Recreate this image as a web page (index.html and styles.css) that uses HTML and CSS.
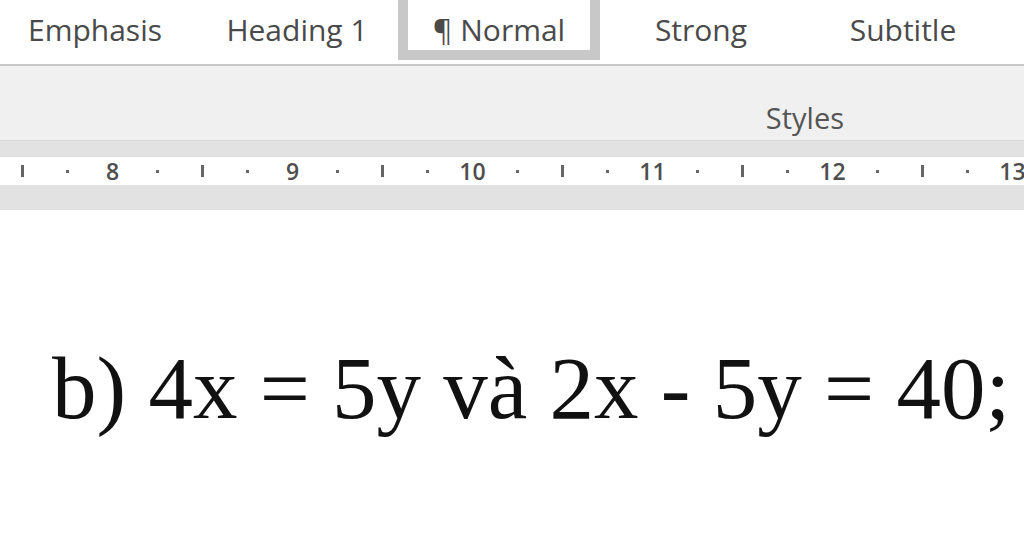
FILE: index.html
```html
<!DOCTYPE html>
<html lang="vi">
<head>
    <meta charset="UTF-8">
    <title>Styles</title>
    <link rel="stylesheet" href="styles.css">
</head>
<body>

<div class="gallery">
    <div class="style-item">Emphasis</div>
    <div class="style-item">Heading 1</div>
    <div class="style-item active">¶ Normal</div>
    <div class="style-item">Strong</div>
    <div class="style-item">Subtitle</div>
</div>

<div class="group-label">
    <span>Styles</span>
</div>

<div class="ruler-bar">
    <div class="ruler">
        <div class="cell"><span class="tick"></span></div>
        <div class="cell"><span class="dot"></span></div>
        <div class="cell num">8</div>
        <div class="cell"><span class="dot"></span></div>
        <div class="cell"><span class="tick"></span></div>
        <div class="cell"><span class="dot"></span></div>
        <div class="cell num">9</div>
        <div class="cell"><span class="dot"></span></div>
        <div class="cell"><span class="tick"></span></div>
        <div class="cell"><span class="dot"></span></div>
        <div class="cell num">10</div>
        <div class="cell"><span class="dot"></span></div>
        <div class="cell"><span class="tick"></span></div>
        <div class="cell"><span class="dot"></span></div>
        <div class="cell num">11</div>
        <div class="cell"><span class="dot"></span></div>
        <div class="cell"><span class="tick"></span></div>
        <div class="cell"><span class="dot"></span></div>
        <div class="cell num">12</div>
        <div class="cell"><span class="dot"></span></div>
        <div class="cell"><span class="tick"></span></div>
        <div class="cell"><span class="dot"></span></div>
        <div class="cell num">13</div>
    </div>
</div>

<div class="page">
    <p class="line">b) 4x = 5y và 2x - 5y = 40;</p>
</div>

</body>
</html>
```

FILE: styles.css
```css
body {
    margin: 0;
    padding: 0;
    background-color: white;
    overflow: hidden;
    font-family: "Open Sans", "Noto Sans", sans-serif;
}

/* style gallery */
.gallery {
    height: 64px;
    display: flex;
    align-items: flex-start;
    margin-left: -6px;
    border-bottom: 2px solid #c8c8c8;
    background-color: white;
}
.style-item {
    flex: 0 0 202px;
    box-sizing: border-box;
    height: 60px;
    padding-top: 10px;
    text-align: center;
    font-size: 30px;
    line-height: 40px;
    color: #4a4a4a;
}
.style-item.active {
    border: 10px solid #c8c8c8;
    border-top: none;
}

.group-label {
    height: 74px;
    box-sizing: border-box;
    padding: 32px 180px 0 0;
    background-color: #f0f0f0;
    display: flex;
    justify-content: flex-end;
}
.group-label span {
    font-size: 29px;
    line-height: 40px;
    color: #555;
}

/* ruler */
.ruler-bar {
    border-top: 1px solid #d6d6d6;
    background-color: #e2e2e2;
    padding: 16px 0 25px 0;
}
.ruler {
    height: 28px;
    background-color: white;
    display: flex;
    white-space: nowrap;
}
.cell {
    flex: 0 0 45px;
    display: flex;
    align-items: center;
    justify-content: center;
    color: #4e4e4e;
}
.cell.num {
    font-size: 23px;
    font-weight: 600;
}
.tick {
    width: 3px;
    height: 12px;
    background-color: #666;
}
.dot {
    width: 3px;
    height: 3px;
    background-color: #666;
}

/* document */
.page {
    padding: 128px 0 0 52px;
}
.line {
    margin: 0;
    font-family: "Liberation Serif", "Times New Roman", serif;
    font-size: 89px;
    line-height: 100px;
    color: #111;
    white-space: nowrap;
}
```
